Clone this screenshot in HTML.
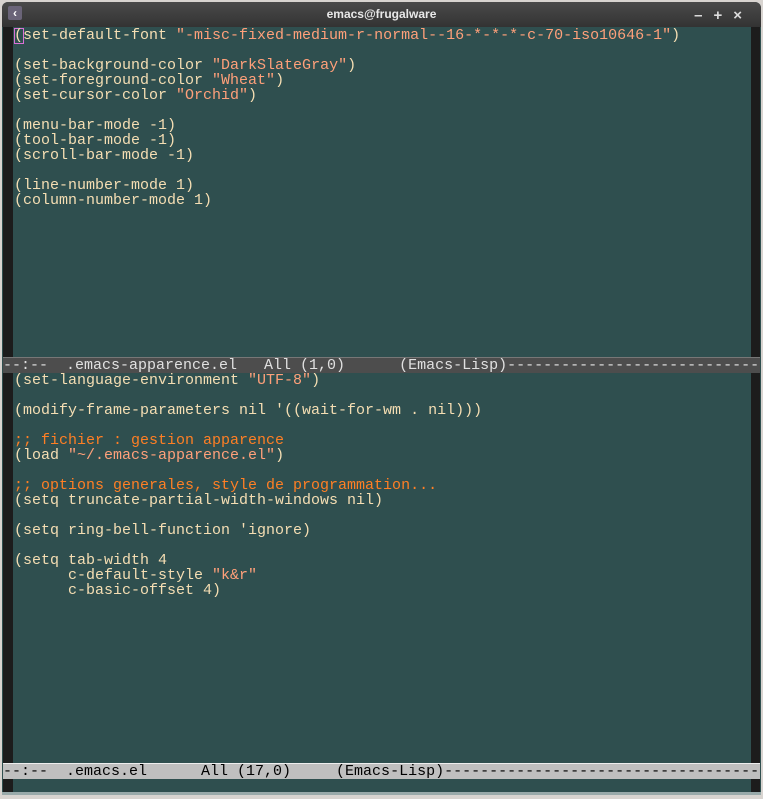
<!DOCTYPE html>
<html><head><style>
html,body{margin:0;padding:0;width:763px;height:799px;overflow:hidden;background:#d8d4d0;}
#win{position:absolute;left:2px;top:2px;width:759px;height:793px;background:#2f4f4f;border-radius:6px 6px 0 0;overflow:hidden;}
#title{position:absolute;left:0;top:0;width:759px;height:25px;background:linear-gradient(#4a4a4a,#333);color:#e8e8e8;font:bold 12px "Liberation Sans",sans-serif;text-align:center;line-height:25px;}
#icon{position:absolute;left:6px;top:4px;width:14px;height:14px;background:#6a6478;border-radius:2px;color:#fff;font:bold 12px "Liberation Sans";line-height:14px;}
#btns{position:absolute;right:8px;top:1px;color:#ddd;font:bold 15px/25px "Liberation Sans";letter-spacing:11px;}
#lstrip{position:absolute;left:1px;top:25px;width:10px;height:768px;background:#1c1c1c;}
#rstrip{position:absolute;left:749px;top:25px;width:9px;height:765px;background:#1c1c1c;}
.txt{position:absolute;left:12px;font:15px/15px "Liberation Mono",monospace;color:#f5deb3;white-space:pre;}
.s{color:#ffa07a}.c{color:#ff7f24}
.ml{position:absolute;left:1px;width:757px;height:15px;font:15px/15px "Liberation Mono",monospace;white-space:pre;overflow:hidden;}
#ml1{top:355px;background:#4d4d4d;color:#e0e0e0;border-top:1px solid #777;}
#ml2{top:761px;background:#bfbfbf;color:#000;border-top:1px solid #eee;}
#cur{position:absolute;left:12px;top:26px;width:8px;height:14px;border:1px solid #da70d6;}
#bot{position:absolute;left:0;top:790px;width:759px;height:3px;background:#9aa;}
</style></head><body>
<div id="win">
<div id="title">emacs@frugalware<div id="icon">&lsaquo;</div><div id="btns">–+×</div></div>
<div id="lstrip"></div><div id="rstrip"></div>
<div id="cur"></div>
<div class="txt" style="top:26px">(set-default-font <span class="s">"-misc-fixed-medium-r-normal--16-*-*-*-c-70-iso10646-1"</span>)

(set-background-color <span class="s">"DarkSlateGray"</span>)
(set-foreground-color <span class="s">"Wheat"</span>)
(set-cursor-color <span class="s">"Orchid"</span>)

(menu-bar-mode -1)
(tool-bar-mode -1)
(scroll-bar-mode -1)

(line-number-mode 1)
(column-number-mode 1)</div>
<div class="ml" id="ml1">--:--  .emacs-apparence.el   All (1,0)      (Emacs-Lisp)----------------------------------------------------</div>
<div class="txt" style="top:371px">(set-language-environment <span class="s">"UTF-8"</span>)

(modify-frame-parameters nil '((wait-for-wm . nil)))

<span class="c">;; fichier : gestion apparence</span>
(load <span class="s">"~/.emacs-apparence.el"</span>)

<span class="c">;; options generales, style de programmation...</span>
(setq truncate-partial-width-windows nil)

(setq ring-bell-function 'ignore)

(setq tab-width 4
      c-default-style <span class="s">"k&amp;r"</span>
      c-basic-offset 4)</div>
<div class="ml" id="ml2">--:--  .emacs.el      All (17,0)     (Emacs-Lisp)------------------------------------------------------------</div>
<div id="bot"></div>
</div>
</body></html>
